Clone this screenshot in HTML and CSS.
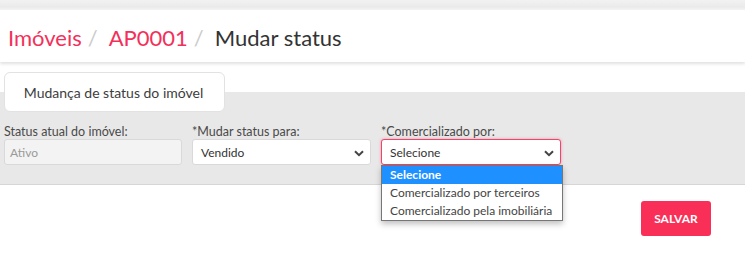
FILE: index.html
```html
<!DOCTYPE html>
<html lang="pt-BR">
<head>
<meta charset="utf-8">
<link rel="stylesheet" href="styles.css">
</head>
<body>
<div class="topband"></div>
<header class="crumbs">
  <span class="crumb link">Imóveis</span><span class="sep">/</span>
  <span class="crumb link">AP0001</span><span class="sep">/</span>
  <span class="crumb current">Mudar status</span>
</header>
<section class="card">
  <div class="tabs"><div class="tab">Mudança de status do imóvel</div></div>
  <div class="panel">
    <div class="field">
      <label class="label">Status atual do imóvel:</label>
      <div class="input disabled">Ativo</div>
    </div>
    <div class="field">
      <label class="label">*Mudar status para:</label>
      <div class="input select">Vendido
        <svg class="chev" viewBox="0 0 10 7" width="10" height="7"><path d="M1 1.2 L5 5.2 L9 1.2" fill="none" stroke="#444" stroke-width="2"/></svg>
      </div>
    </div>
    <div class="field">
      <label class="label">*Comercializado por:</label>
      <div class="input select focus">Selecione
        <svg class="chev" viewBox="0 0 10 7" width="10" height="7"><path d="M1 1.2 L5 5.2 L9 1.2" fill="none" stroke="#444" stroke-width="2"/></svg>
        <ul class="menu">
          <li class="opt active">Selecione</li>
          <li class="opt">Comercializado por terceiros</li>
          <li class="opt">Comercializado pela imobiliária</li>
        </ul>
      </div>
    </div>
  </div>
  <div class="actions"><button class="btn">SALVAR</button></div>
</section>
</body>
</html>
```
FILE: styles.css
```css
* { box-sizing: border-box; }
html, body { margin: 0; padding: 0; background: #fff; }
body { font-family: Lato, "Open Sans", sans-serif; color: #444; width: 745px; height: 260px; overflow: hidden; }
.topband { height: 10px; background: linear-gradient(#f2f2f2, #eaeaea 70%, #f4f4f4); }
.crumbs {
  height: 52px; background: #fff;
  box-shadow: 0 2px 3px rgba(0,0,0,0.12);
  display: flex; align-items: center; padding-left: 8px; padding-top: 3px;
  font-size: 22px; line-height: 1;
}
.crumb.link { color: #f3305a; }
.crumb.current { color: #333; }
.sep { color: #ccc; margin: 0 11px 0 6px; }
.card { margin-top: 10px; position: relative; }
.tabs { padding-left: 4px; position: relative; z-index: 2; height: 20px; }
.tab {
  width: 221px; height: 40px; background: #fff; border: 1px solid #e2e2e2; border-radius: 6px;
  font-size: 14px; color: #3d3d3d; display: flex; align-items: center; justify-content: center;
  padding-right: 2px; padding-top: 1px;
}
.panel {
  background: #e8e8e8; border-bottom: 1px solid #d6d6d6;
  height: 93px; padding: 32px 0 0 4px;
  display: grid; grid-template-columns: 178px 179px 180px; column-gap: 10px;
  position: relative; z-index: 1;
}
.label { display: block; font-size: 12.5px; color: #4a4a4a; height: 15px; line-height: 15px; margin-bottom: 0; }
.input {
  height: 26px; border: 1px solid #d9d9d9; border-radius: 3px; background: #fff;
  font-size: 12px; color: #333; display: flex; align-items: center; padding-left: 8px; position: relative;
}
.input.disabled { background: #f3f3f3; color: #9a9a9a; padding-left: 5px; }
.select .chev { position: absolute; right: 6px; top: 10px; }
.select.focus { border-color: #f0446a; box-shadow: 0 0 3px rgba(243,48,90,0.45); }
.menu {
  position: absolute; left: -1px; top: 25px; width: 182px; margin: 0; padding: 0; list-style: none;
  background: #fff; border: 1px solid #767676; box-shadow: 0 3px 6px rgba(0,0,0,0.25);
  z-index: 5;
}
.opt { height: 18px; line-height: 18px; padding-left: 8px; font-size: 12px; color: #444; }
.opt.active { background: #1e90ff; color: #fff; font-weight: 700; }
.actions { display: flex; justify-content: flex-end; padding: 16px 34px 0 0; }
.btn {
  width: 70px; height: 35px; border: 0; border-radius: 3px; background: #f92f57; color: #fff;
  font-family: Lato, sans-serif; font-weight: 700; font-size: 12px; padding: 0;
}
```
